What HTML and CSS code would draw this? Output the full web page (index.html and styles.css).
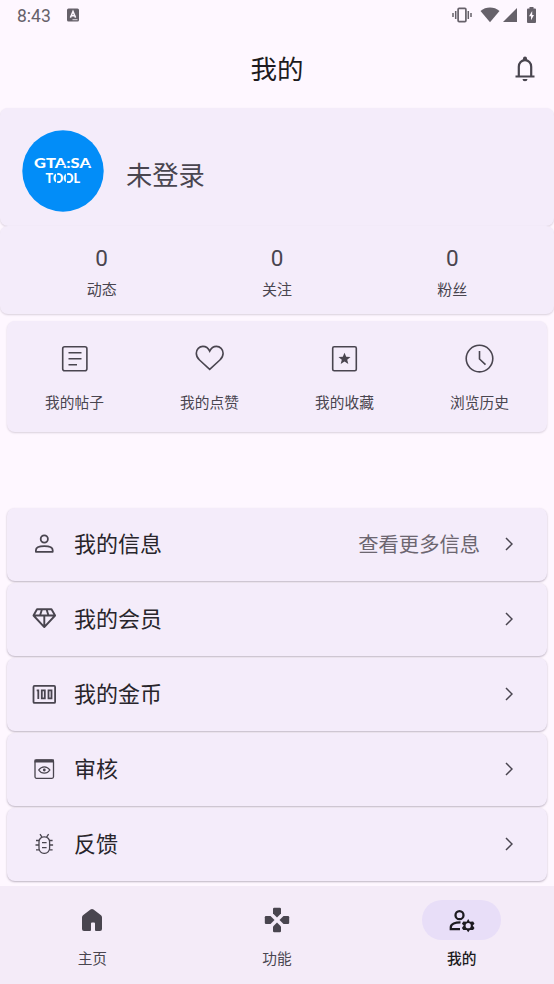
FILE: index.html
```html
<!DOCTYPE html>
<html lang="zh-CN">
<head>
<meta charset="utf-8">
<title>我的</title>
<link rel="stylesheet" href="styles.css">
</head>
<body>
<div class="statusbar">
  <span class="clock">8:43</span>
  <svg class="badge-a" width="12" height="14" viewBox="0 0 12 14"><rect y="0.5" width="12" height="13" rx="1.5" fill="#66616a"/><path d="M3.4 9.600 6 3.400l2.600 6.200M4.300 7.700h3.400" fill="none" stroke="#fef7ff" stroke-width="1.500"/><path d="M5.500 11.700h5" stroke="#fef7ff" stroke-width=".8"/></svg>
  <span class="spacer"></span>
  <svg class="vibrate" width="20" height="16" viewBox="0 0 20 16" fill="none" stroke="#66616a" stroke-width="1.700"><rect x="6.100" y="1.400" width="7.800" height="13.200" rx="1"/><path d="M3.700 4v8M1 6v4M16.300 4v8M19 6v4" stroke-width="1.500"/></svg>
  <svg class="wifi" width="20" height="16" viewBox="0 0 20 16"><path d="M.5 4C6-.6 14-.6 19.500 4L10 15.300Z" fill="#66616a"/></svg>
  <svg class="signal" width="14" height="14" viewBox="0 0 14 14"><path d="M14 0v14H0Z" fill="#66616a"/></svg>
  <svg class="battery" width="9" height="16" viewBox="0 0 9 16"><path d="M2.500 0h4v1.500H8q1 0 1 1V15q0 1-1 1H1q-1 0-1-1V2.500q0-1 1-1h1.500Z" fill="#66616a"/><path d="M5.200 4 2 9.200h2v4L7 8H5.200Z" fill="#fef7ff"/></svg>
</div>
<header class="header">
  <h1>我的</h1>
  <svg class="bell" width="20" height="26" viewBox="0 0 20 26"><path d="M3.800 20.300V10.700a6.200 6.500 0 0 1 12.400 0v9.600M.5 20.500h19" fill="none" stroke="#49454f" stroke-width="2.200"/><path d="M8 4V2.500a2 2 0 0 1 4 0V4ZM7.500 23h5a2.500 2.200 0 0 1-5 0Z" fill="#49454f"/></svg>
</header>
<main>
  <section class="profile">
    <div class="avatar">
      <svg width="82" height="82" viewBox="0 0 82 82">
        <circle cx="41" cy="41" r="40.700" fill="#028df8"/>
        <text class="logo" x="12" y="38" textLength="57" lengthAdjust="spacingAndGlyphs">GTA:SA</text>
        <text class="logo small" x="23.500" y="52.500" textLength="34.500" lengthAdjust="spacingAndGlyphs">TOOL</text>
        <path class="cut" d="M36.500 35.600h6M61.500 35.600h6M34.600 43v10M44.500 43v10"/>
      </svg>
    </div>
    <span class="username">未登录</span>
  </section>
  <section class="stats">
    <div class="stat"><b>0</b><span>动态</span></div>
    <div class="stat"><b>0</b><span>关注</span></div>
    <div class="stat"><b>0</b><span>粉丝</span></div>
  </section>
  <section class="quick">
    <div class="quick-item"><svg width="30" height="30" viewBox="0 0 30 30"><rect x="2.700" y="2.700" width="24.200" height="24" rx="2"/><path d="M8.500 8.700h13M8.500 14.700h13M8.500 20.800h8.500"/></svg><span>我的帖子</span></div>
    <div class="quick-item"><svg width="30" height="30" viewBox="0 0 30 30"><path d="M14.700 25.400 4.500 16C2.300 14 1.300 11.800 1.300 9.300c0-4.100 3-6.900 6.600-6.900 3.100 0 5.500 1.900 6.800 4.700 1.300-2.800 3.700-4.700 6.800-4.700 3.600 0 6.600 2.800 6.600 6.900 0 2.500-1 4.700-3.200 6.700Z"/></svg><span>我的点赞</span></div>
    <div class="quick-item"><svg width="30" height="30" viewBox="0 0 30 30"><rect x="2.700" y="2.700" width="23.600" height="24" rx="1.500"/><path class="solid" d="m14.500 8.800 1.700 3.900 4.300.3-3.300 2.700 1.100 4.200-3.800-2.300-3.800 2.300 1.100-4.200-3.300-2.700 4.300-.3Z"/></svg><span>我的收藏</span></div>
    <div class="quick-item"><svg width="30" height="30" viewBox="0 0 30 30"><circle cx="14.500" cy="14.600" r="13.300"/><path d="M14.500 7v8l6 5.700"/></svg><span>浏览历史</span></div>
  </section>
  <section class="menu">
    <div class="row"><svg class="icon" width="26" height="26" viewBox="0 0 26 26" stroke-width="1.800"><circle cx="13.300" cy="8" r="3.600"/><path d="M4.900 20.800v-1.600c0-3 4.500-4.100 8.400-4.100s8.400 1.100 8.400 4.100v1.600Z" stroke-linejoin="round"/></svg><span class="label">我的信息</span><span class="hint">查看更多信息</span><svg class="chevron" width="8" height="14" viewBox="0 0 8 14"><path d="m1 1 6 6-6 6"/></svg></div>
    <div class="row"><svg class="icon" width="26" height="26" viewBox="0 0 26 26" stroke-width="1.900" stroke-linejoin="round"><path d="M6 3.300h14.500l3.600 6.200-10.800 11.600L2.500 9.500ZM2.500 9.500h21.600M11 3.300 9 9.500M15.500 3.300l2 6.200M13.300 9.500V21"/></svg><span class="label">我的会员</span><svg class="chevron" width="8" height="14" viewBox="0 0 8 14"><path d="m1 1 6 6-6 6"/></svg></div>
    <div class="row"><svg class="icon" width="26" height="26" viewBox="0 0 26 26" stroke-width="1.800"><rect x="2.500" y="4.900" width="21.600" height="17" rx="1"/><path d="M5.700 9.300h1.600v8.800M10.800 9.300h3v8h-3ZM17.500 9.300h3v8h-3Z"/></svg><span class="label">我的金币</span><svg class="chevron" width="8" height="14" viewBox="0 0 8 14"><path d="m1 1 6 6-6 6"/></svg></div>
    <div class="row"><svg class="icon" width="26" height="26" viewBox="0 0 26 26" stroke-width="1.300"><rect x="4" y="4" width="18.500" height="18.300" rx="1.500"/><path class="solid" d="M3.500 3.500H23v3H3.500Z"/><path d="M7.700 14c3-4.300 8.200-4.300 11.200 0-3 4.300-8.200 4.300-11.200 0Z"/><circle class="solid" cx="13.300" cy="14" r="1.400"/></svg><span class="label">审核</span><svg class="chevron" width="8" height="14" viewBox="0 0 8 14"><path d="m1 1 6 6-6 6"/></svg></div>
    <div class="row"><svg class="icon" width="26" height="26" viewBox="0 0 26 26" stroke-width="1.300"><rect x="8" y="5.800" width="10.600" height="16.500" rx="5"/><path d="m9 3.200 2 2.900M17.600 3.200l-2 2.900M8 9.500H5M4.500 14H8M5 18.800h3M18.600 9.500h3M18.600 14h3.500M18.600 18.800h3M11 11.700h4.600M11 16.600h4.600"/></svg><span class="label">反馈</span><svg class="chevron" width="8" height="14" viewBox="0 0 8 14"><path d="m1 1 6 6-6 6"/></svg></div>
  </section>
</main>
<nav class="nav">
  <div class="tab"><span class="pill"><svg width="30" height="30" viewBox="0 0 30 30"><path d="M5 12.500q0-1.500 1-2.300l7.500-5.700q1.500-1.200 3 0l7.500 5.700q1 .8 1 2.300V24q0 2-2 2h-4q-1 0-1-1v-6.500q0-1-1-1h-2q-1 0-1 1V25q0 1-1 1H7q-2 0-2-2Z" fill="#49454f"/></svg></span><span>主页</span></div>
  <div class="tab"><span class="pill"><svg width="30" height="30" viewBox="0 0 30 30"><g fill="#49454f"><path id="pad" d="M11 4q0-1.200 1.200-1.200h5.600Q19 2.800 19 4v4.500l-4 4-4-4Z"/><use href="#pad" transform="rotate(90 15 15)"/><use href="#pad" transform="rotate(180 15 15)"/><use href="#pad" transform="rotate(270 15 15)"/></g></svg></span><span>功能</span></div>
  <div class="tab active"><span class="pill"><svg width="30" height="30" viewBox="0 0 30 30"><circle cx="12.500" cy="10.200" r="4" fill="none" stroke="#1d1b20" stroke-width="2.300"/><path d="M13.500 17.300c-5 0-9.700 1.400-9.700 5v1.800H13" fill="none" stroke="#1d1b20" stroke-width="2.300"/><path d="m21.200 13.900 1.600 2.800 3.300-.1 1.400 2.100-1.800 1.900 1.800 2.400-1.400 2.100-3.300-.1-1.600 2.300-1.600-2.300-3.300.1-1.400-2.100 1.800-2.400-1.800-1.900 1.400-2.100 3.300.1Z" fill="#1d1b20"/><circle cx="21.200" cy="20.700" r="2.600" fill="#e8def8"/></svg></span><span>我的</span></div>
</nav>
</body>
</html>
```
FILE: styles.css
```css
* { box-sizing: border-box; }
body {
  margin: 0;
  width: 554px;
  height: 984px;
  overflow: hidden;
  display: flex;
  flex-direction: column;
  background: #fef7ff;
  color: #49454f;
  font-family: Roboto, "Noto Sans CJK SC", sans-serif;
}
svg { display: block; flex: none; }
.statusbar { height: 30px; padding: 0 18px 0 17px; display: flex; align-items: center; }
.clock { font-size: 17.500px; color: #66616a; width: 50px; line-height: 30px; padding-top: 1px; }
.spacer { flex: 1; }
.wifi { margin-left: 8px; }
.signal { margin: 0 10px 0 3px; }
.header { height: 78px; display: grid; grid-template-columns: 1fr auto 1fr; align-items: center; padding-right: 20px; }
h1 { grid-column: 2; margin: 2px -20px 0 0; font-weight: 400; font-size: 26.500px; line-height: 40px; color: #1d1b20; }
.bell { justify-self: end; margin-right: -1px; }
main { display: flex; flex-direction: column; height: 778px; }
.profile, .stats, .quick, .row { background: #f4ecfa; border-radius: 8px; box-shadow: 0 1px 2px rgba(70, 55, 80, .2); }
.profile { height: 118px; display: flex; align-items: center; padding: 7px 22px 0; gap: 22px; }
.username { font-size: 26.300px; line-height: 40px; padding-top: 10px; }
.logo { fill: #fff; font: 900 14px Lato, sans-serif; }
.logo.small { font-size: 13px; }
.cut { fill: none; stroke: #028df8; stroke-width: 1.200; }
.stats { height: 88px; display: grid; grid-template-columns: repeat(3, 1fr); padding: 16px 14px 0; }
.stat { display: flex; flex-direction: column; align-items: center; }
.stat b { font-size: 22.500px; line-height: 32px; font-weight: 400; }
.stat span { font-size: 15px; line-height: 22px; margin-top: 5px; }
.quick { height: 111px; margin: 7px 7px 0; display: grid; grid-template-columns: repeat(4, 1fr); padding-top: 23px; }
.quick-item { display: flex; flex-direction: column; align-items: center; gap: 18px; font-size: 14.700px; line-height: 22px; }
.quick svg, .icon, .chevron { fill: none; stroke: #49454f; }
.quick svg { stroke-width: 1.600; }
.quick .solid, .icon .solid { fill: #49454f; stroke: none; }
.menu { margin: 76px 7px 0; display: flex; flex-direction: column; gap: 2px; }
.row { height: 73px; display: flex; align-items: center; padding: 0 34px 0 24px; box-shadow: 0 1px 2px rgba(70, 55, 80, .35); }
.icon, .chevron { margin-bottom: 2px; }
.label { margin-left: 17px; flex: 1; font-size: 22px; line-height: 32px; color: #28252b; }
.hint { font-size: 20.300px; line-height: 30px; color: #6c6670; margin-right: 25px; }
.chevron { stroke-width: 1.500; }
.nav { height: 98px; display: grid; grid-template-columns: repeat(3, 1fr); background: #f4ebf8; padding-top: 14px; }
.tab { display: flex; flex-direction: column; align-items: center; font-size: 14.700px; line-height: 22px; gap: 8px; }
.pill { width: 79px; height: 40px; border-radius: 20px; display: flex; align-items: center; justify-content: center; }
.active { color: #1d1b20; font-weight: 500; }
.active .pill { background: #e8def8; }
```
